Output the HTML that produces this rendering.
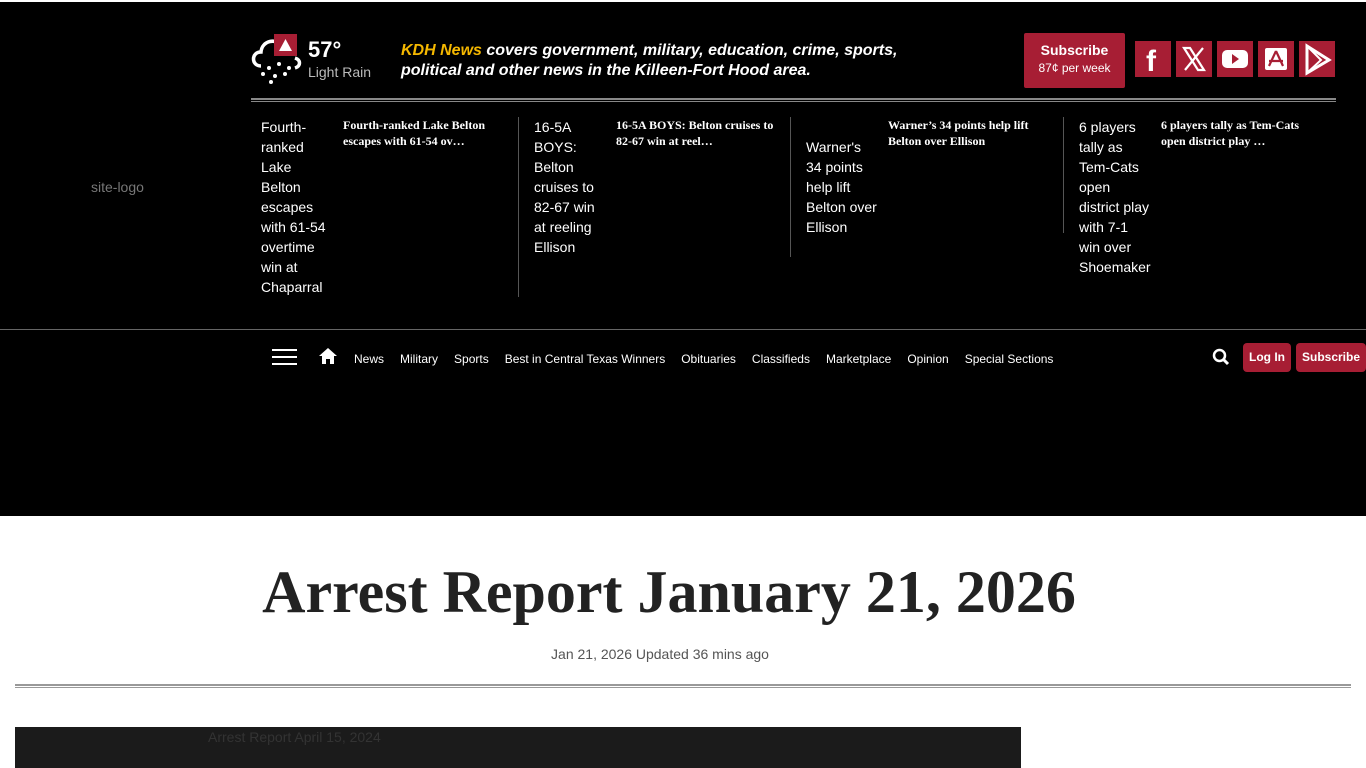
<!DOCTYPE html>
<html><head><meta charset="utf-8"><style>
*{margin:0;padding:0;box-sizing:border-box}
body{width:1366px;height:768px;overflow:hidden;background:#fff;font-family:"Liberation Sans",Arial,sans-serif}
#hdr{position:absolute;left:0;top:2px;width:1366px;height:514px;background:#000}
.abs{position:absolute}
.ic{position:absolute;top:41px;width:36px;height:36px;background:#a71e34}
.st{position:absolute;top:117px;width:273px;display:flex}
.st .im{width:72px;color:#fff;font-size:14px;line-height:20px;margin-left:10px}
.st .t{color:#fff;font:bold 12px/16px "Liberation Serif",serif;margin-left:10px;width:165px}
.sep{position:absolute;width:1px;background:#555}
.nav a{color:#fff;font-size:12px;text-decoration:none;margin-right:16px}
.btn{position:absolute;top:343px;height:29px;background:#a71e34;color:#fff;font-weight:bold;font-size:12px;line-height:29px;text-align:center;border-radius:4px}
</style></head><body>
<div id="hdr"></div>
<div class="abs" style="left:91px;top:179px;color:#777;font-size:14px">site-logo</div>
<!-- weather -->
<svg class="abs" style="left:249px;top:32px" width="58" height="54" viewBox="0 0 58 54"><path d="M12 34 C2 34 2 20 12 20 C13 8 28 6 32 14" fill="none" stroke="#fff" stroke-width="3.5"/><path d="M46 26 C52 28 52 34 46 36" fill="none" stroke="#fff" stroke-width="3.5"/><rect x="25" y="2" width="23" height="22" fill="#a71e34"/><path d="M36.5 7 L43 19 L30 19Z" fill="#fff"/><g fill="#fff"><circle cx="20" cy="36" r="2"/><circle cx="30" cy="32" r="2"/><circle cx="40" cy="36" r="2"/><circle cx="14" cy="42" r="2"/><circle cx="26" cy="44" r="2"/><circle cx="36" cy="42" r="2"/><circle cx="22" cy="50" r="2"/></g></svg>
<div class="abs" style="left:308px;top:37px;color:#fff;font-size:22px;font-weight:bold">57°</div>
<div class="abs" style="left:308px;top:64px;color:#bbb;font-size:14px">Light Rain</div>
<div class="abs" style="left:401px;top:41px;color:#fff;font-size:16px;font-weight:bold;font-style:italic;line-height:20px"><span style="color:#f5b800">KDH News</span> covers government, military, education, crime, sports,<br>political and other news in the Killeen-Fort Hood area.</div>
<div class="abs" style="left:1024px;top:33px;width:101px;height:55px;background:#a71e34;border-radius:2px;color:#fff;text-align:center"><div style="font-weight:bold;font-size:14px;margin-top:9px">Subscribe</div><div style="font-size:12px;margin-top:3px">87¢ per week</div></div>
<div class="ic" style="left:1135px"><svg width="36" height="36"><text x="11" y="30" fill="#fff" font-size="30" font-weight="bold" font-family="Liberation Sans">f</text></svg></div>
<div class="ic" style="left:1176px"><svg width="36" height="36" viewBox="0 0 36 36"><path d="M8 7h6l14 22h-6Z" fill="none" stroke="#fff" stroke-width="2.2"/><path d="M27 7 L9 29" stroke="#fff" stroke-width="2.2"/></svg></div>
<div class="ic" style="left:1217px"><svg width="36" height="36"><rect x="5" y="9" width="26" height="18" rx="5" fill="#fff"/><path d="M15 13l7 5-7 5z" fill="#a71e34"/></svg></div>
<div class="ic" style="left:1258px"><svg width="36" height="36"><rect x="7" y="7" width="22" height="22" rx="2" fill="#fff"/><path d="M18 10 L11 25 M18 10 L25 25 M11 20 H25" stroke="#a71e34" stroke-width="2.2" fill="none"/></svg></div>
<div class="ic" style="left:1299px"><svg width="36" height="36"><path d="M8 5 L30 19 L8 32Z" fill="none" stroke="#fff" stroke-width="3"/><path d="M8 5 L22 19 L8 32" fill="none" stroke="#fff" stroke-width="2"/></svg></div>
<div class="abs" style="left:251px;top:98px;width:1085px;height:4px;border-top:2px solid #888;border-bottom:1px solid #888"></div>
<!-- stories -->
<div class="st" style="left:251px"><div class="im">Fourth-ranked Lake Belton escapes with 61-54 overtime win at Chaparral</div><div class="t">Fourth-ranked Lake Belton escapes with 61-54 ov…</div></div>
<div class="sep" style="left:518px;top:117px;height:180px"></div>
<div class="st" style="left:524px"><div class="im">16-5A BOYS: Belton cruises to 82-67 win at reeling Ellison</div><div class="t">16-5A BOYS: Belton cruises to 82-67 win at reel…</div></div>
<div class="sep" style="left:790px;top:117px;height:140px"></div>
<div class="st" style="left:796px"><div class="im"><br>Warner's 34 points help lift Belton over Ellison</div><div class="t">Warner’s 34 points help lift Belton over Ellison</div></div>
<div class="sep" style="left:1063px;top:117px;height:116px"></div>
<div class="st" style="left:1069px"><div class="im">6 players tally as Tem-Cats open district play with 7-1 win over Shoemaker</div><div class="t">6 players tally as Tem-Cats open district play …</div></div>
<div class="abs" style="left:0;top:329px;width:1366px;height:1px;background:#666"></div>
<!-- nav -->
<div class="abs" style="left:272px;top:349px;width:25px;height:16px;border-top:2px solid #fff;border-bottom:2px solid #fff"><div style="margin-top:5px;height:2px;background:#fff"></div></div>
<svg class="abs" style="left:318px;top:347px" width="20" height="18" viewBox="0 0 20 18"><path d="M10 1 L1 9 H4 V17 H8 V12 H12 V17 H16 V9 H19Z" fill="#fff"/></svg>
<div class="abs nav" style="left:354px;top:350px"><a>News</a><a>Military</a><a>Sports</a><a>Best in Central Texas Winners</a><a>Obituaries</a><a>Classifieds</a><a>Marketplace</a><a>Opinion</a><a>Special Sections</a></div>
<svg class="abs" style="left:1212px;top:348px" width="18" height="18"><circle cx="7.5" cy="7.5" r="5.5" fill="none" stroke="#fff" stroke-width="2.5"/><path d="M11.5 11.5 L16 16" stroke="#fff" stroke-width="3"/></svg>
<div class="btn" style="left:1243px;width:48px">Log In</div>
<div class="btn" style="left:1296px;width:70px">Subscribe</div>
<!-- article -->
<div class="abs" style="left:0;top:556px;width:1338px;text-align:center;color:#222;font:bold 60px/72px 'Liberation Serif',serif">Arrest Report January 21, 2026</div>
<div class="abs" style="left:0;top:646px;width:1320px;text-align:center;color:#555;font-size:14px">Jan 21, 2026 Updated 36 mins ago</div>
<div class="abs" style="left:15px;top:684px;width:1336px;height:4px;border-top:2px solid #999;border-bottom:1px solid #999"></div>
<div class="abs" style="left:15px;top:727px;width:1006px;height:41px;background:#1b1b1b"><div style="position:absolute;left:193px;top:2px;color:#333;font-size:14px">Arrest Report April 15, 2024</div></div>
</body></html>
